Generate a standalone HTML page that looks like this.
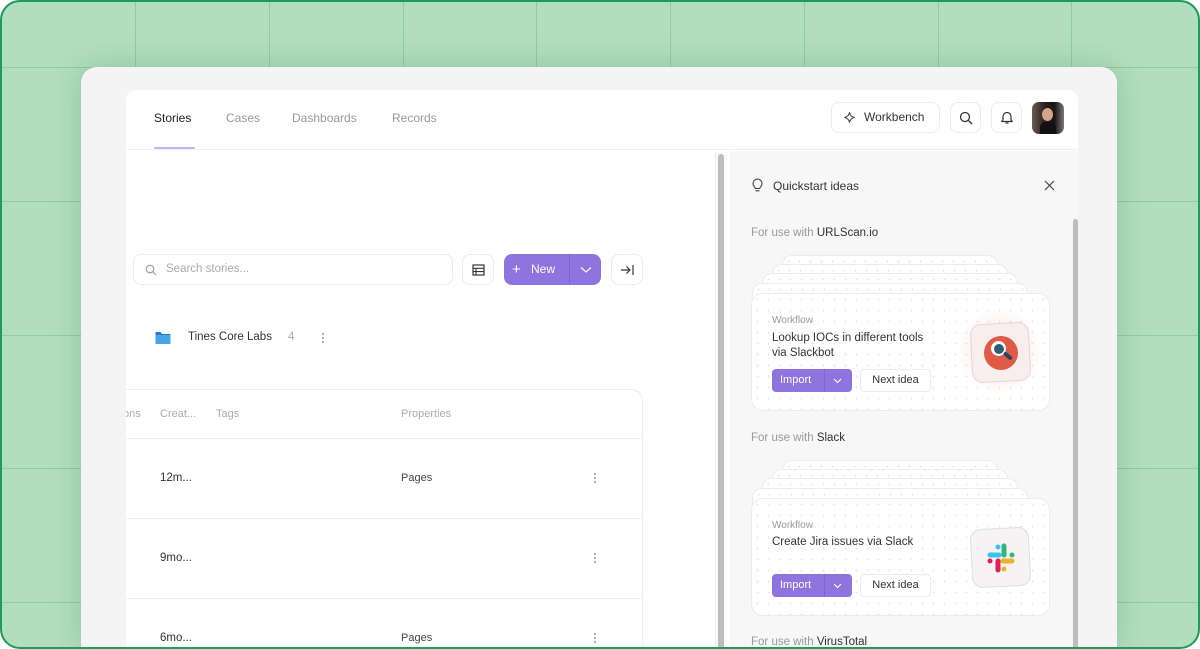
<!DOCTYPE html>
<html><head><meta charset="utf-8"><style>
*{box-sizing:border-box;margin:0;padding:0}
html,body{width:1200px;height:649px;overflow:hidden}
body{font-family:"Liberation Sans",sans-serif;background:#fff;position:relative}
.frame{position:absolute;left:0;top:0;width:1200px;height:649px;border:2px solid #1f9a5e;border-radius:20px;overflow:hidden;background:#b1dfbd}
.vl{position:absolute;top:0;bottom:0;width:1px;background:#93cba2}
.hl{position:absolute;left:0;right:0;height:1px;background:#93cba2}
.win{position:absolute;left:79px;top:65px;width:1036px;height:582px;background:#f4f4f4;border-radius:16px 16px 0 0;box-shadow:0 0 30px rgba(0,60,20,.18);overflow:hidden}
.main{position:absolute;left:45px;top:23px;width:952px;height:559px;background:#fff;border-radius:10px 10px 0 0;overflow:hidden}
.hdr{position:absolute;left:0;top:0;right:0;height:60px;border-bottom:1px solid #f0f0f0;background:#fff}
.nav{position:absolute;top:21px;font-size:12px;color:#999}
.t{position:absolute;white-space:nowrap}
.btn{position:absolute;border:1px solid #ebebeb;border-radius:8px;background:#fff}
.ql{font-size:11.5px;color:#999}
.ql b{font-weight:normal;color:#333}
.card{position:absolute;background:#fff;border:1px solid #ececec;border-radius:12px;background-image:radial-gradient(#e6e6e6 0.8px,transparent 1px);background-size:11px 11px}
.imp{position:absolute;width:80px;height:23px;background:#8f74e0;border-radius:4px;color:#fff;font-size:11px;line-height:23px}
.nxt{position:absolute;width:71px;height:23px;border:1px solid #ececec;border-radius:4px;background:#fff;font-size:11px;color:#333;text-align:center;line-height:21px}
.kb{position:absolute;width:2px;height:2px;border-radius:1px;background:#999;box-shadow:0 4px 0 #999,0 8px 0 #999}
</style></head><body>
<div class="frame">
<div class="vl" style="left:133px"></div><div class="vl" style="left:267px"></div><div class="vl" style="left:401px"></div><div class="vl" style="left:534px"></div><div class="vl" style="left:668px"></div><div class="vl" style="left:802px"></div><div class="vl" style="left:936px"></div><div class="vl" style="left:1069px"></div>
<div class="hl" style="top:65px"></div><div class="hl" style="top:199px"></div><div class="hl" style="top:333px"></div><div class="hl" style="top:466px"></div><div class="hl" style="top:600px"></div>
<div class="win">
<div class="main">
<div class="hdr">
<div class="nav" style="left:28px;color:#222">Stories</div>
<div style="position:absolute;left:28px;top:57px;width:41px;height:2px;background:#c3b5ef;border-radius:1px"></div>
<div class="nav" style="left:100px">Cases</div>
<div class="nav" style="left:166px">Dashboards</div>
<div class="nav" style="left:266px">Records</div>
<div class="btn" style="left:705px;top:12px;width:109px;height:31px;font-size:12px;color:#333;line-height:29px;padding-left:32px">Workbench
<svg style="position:absolute;left:11px;top:8px" width="13" height="13" viewBox="0 0 14 14"><path d="M7 1.5 Q7.8 6.2 12.5 7 Q7.8 7.8 7 12.5 Q6.2 7.8 1.5 7 Q6.2 6.2 7 1.5Z" fill="none" stroke="#444" stroke-width="1.1"/></svg></div>
<div class="btn" style="left:824px;top:12px;width:31px;height:31px"><svg style="position:absolute;left:8px;top:8px" width="14" height="14" viewBox="0 0 14 14"><circle cx="6" cy="6" r="4.5" fill="none" stroke="#333" stroke-width="1.3"/><path d="M9.5 9.5 13 13" stroke="#333" stroke-width="1.3"/></svg></div>
<div class="btn" style="left:865px;top:12px;width:31px;height:31px"><svg style="position:absolute;left:8px;top:7px" width="14" height="15" viewBox="0 0 14 15"><path d="M3 10V6.5a4 4 0 0 1 8 0V10l1.2 1.5H1.8Z" fill="none" stroke="#333" stroke-width="1.2" stroke-linejoin="round"/><path d="M5.5 13h3" stroke="#333" stroke-width="1.2"/></svg></div>
<div style="position:absolute;left:906px;top:12px;width:32px;height:32px;border-radius:7px;background:linear-gradient(90deg,#6b5a52,#2a201e 40%,#1a1414 70%,#777);overflow:hidden"><div style="position:absolute;left:10px;top:6px;width:11px;height:13px;border-radius:50%;background:#d4a48c"></div><div style="position:absolute;left:8px;top:20px;width:16px;height:14px;background:#111;border-radius:5px 5px 0 0"></div></div>
</div>
<div class="btn" style="left:7px;top:164px;width:320px;height:31px;font-size:11.5px;color:#aaa;line-height:29px;padding-left:32px">Search stories...
<svg style="position:absolute;left:11px;top:9px" width="12" height="12" viewBox="0 0 12 12"><circle cx="5" cy="5" r="3.8" fill="none" stroke="#999" stroke-width="1.1"/><path d="M8 8 11 11" stroke="#999" stroke-width="1.1"/></svg></div>
<div class="btn" style="left:336px;top:164px;width:32px;height:31px"><svg style="position:absolute;left:9px;top:9px" width="13" height="12" viewBox="0 0 13 12"><rect x="1" y="1" width="11" height="10" fill="none" stroke="#333" stroke-width="1.2"/><path d="M1 4.3h11M1 7.6h11M4 4.3v6.7" stroke="#333" stroke-width="1.1"/></svg></div>
<div style="position:absolute;left:378px;top:164px;width:97px;height:31px;background:#8f74e0;border-radius:8px;color:#fff;font-size:12px;line-height:31px">
<span style="position:absolute;left:8px;top:0;font-size:15px;font-weight:300">+</span><span style="position:absolute;left:27px">New</span>
<div style="position:absolute;left:65px;top:0;width:1px;height:31px;background:#7d62d0"></div>
<svg style="position:absolute;left:76px;top:12px" width="12" height="8" viewBox="0 0 12 8"><path d="M1 1.5 6 6 11 1.5" fill="none" stroke="#fff" stroke-width="1.2"/></svg></div>
<div class="btn" style="left:485px;top:164px;width:32px;height:31px"><svg style="position:absolute;left:8px;top:9px" width="15" height="12" viewBox="0 0 15 12"><path d="M1 6h9M6.5 2.5 10 6 6.5 9.5M13 1v10" fill="none" stroke="#333" stroke-width="1.2"/></svg></div>
<svg style="position:absolute;left:29px;top:241px" width="16" height="14" viewBox="0 0 16 14"><path d="M0.5 1h5l1.5 2h8.5v10h-15z" fill="#2a78c8"/><path d="M0.5 4h15v9h-15z" fill="#4aa4ec"/></svg>
<div class="t" style="left:62px;top:241px;font-size:11.5px;color:#333">Tines Core Labs</div>
<div class="t" style="left:162px;top:241px;font-size:11.5px;color:#aaa">4</div>
<div class="kb" style="left:196px;top:243px"></div>
<div style="position:absolute;left:-20px;top:299px;width:537px;height:320px;border:1px solid #efefef;border-radius:12px;background:#fff">
<div style="position:absolute;left:0;right:0;top:48px;height:1px;background:#f0f0f0"></div>
<div style="position:absolute;left:0;right:0;top:128px;height:1px;background:#f0f0f0"></div>
<div style="position:absolute;left:0;right:0;top:208px;height:1px;background:#f0f0f0"></div>
</div>
<div class="t" style="left:-3px;top:318px;font-size:11px;color:#aaa">ons</div>
<div class="t" style="left:34px;top:318px;font-size:11px;color:#aaa">Creat...</div>
<div class="t" style="left:90px;top:318px;font-size:11px;color:#aaa">Tags</div>
<div class="t" style="left:275px;top:318px;font-size:11px;color:#aaa">Properties</div>
<div class="t" style="left:34px;top:382px;font-size:11.5px;color:#333">12m...</div>
<div class="t" style="left:275px;top:382px;font-size:11px;color:#444">Pages</div>
<div class="t" style="left:34px;top:462px;font-size:11.5px;color:#333">9mo...</div>
<div class="t" style="left:34px;top:542px;font-size:11.5px;color:#333">6mo...</div>
<div class="t" style="left:275px;top:542px;font-size:11px;color:#444">Pages</div>
<div class="kb" style="left:468px;top:383px"></div>
<div class="kb" style="left:468px;top:463px"></div>
<div class="kb" style="left:468px;top:543px"></div>
<div style="position:absolute;left:589px;top:62px;width:12px;height:540px;background:#fafafa;border-left:1px solid #eee"></div>
<div style="position:absolute;left:592px;top:64px;width:6px;height:540px;background:#bdbdbd;border-radius:3px"></div>
<div style="position:absolute;left:604px;top:61px;width:348px;height:540px;background:#f7f7f7">
<svg style="position:absolute;left:21px;top:27px" width="13" height="15" viewBox="0 0 13 15"><path d="M4.3 10.5C4 9 2 8 2 5.6a4.5 4.5 0 0 1 9 0C11 8 9 9 8.7 10.5Z" fill="none" stroke="#444" stroke-width="1.1"/><path d="M4.5 12.8h4" stroke="#444" stroke-width="1.1"/></svg>
<div class="t" style="left:43px;top:28px;font-size:12px;color:#333">Quickstart ideas</div>
<svg style="position:absolute;left:314px;top:29px" width="11" height="11" viewBox="0 0 11 11"><path d="M1 1 10 10M10 1 1 10" stroke="#444" stroke-width="1.2"/></svg>
<div style="position:absolute;left:343px;top:68px;width:5px;height:480px;background:#bdbdbd;border-radius:3px"></div>
<div class="t ql" style="left:21px;top:76px">For use with <b>URLScan.io</b></div>
<div class="card" style="left:52px;top:104px;width:216px;height:60px;border-radius:10px"></div>
<div class="card" style="left:42px;top:113px;width:236px;height:60px;border-radius:10px"></div>
<div class="card" style="left:32px;top:122px;width:256px;height:60px;border-radius:10px"></div>
<div class="card" style="left:22px;top:132px;width:276px;height:60px;border-radius:10px"></div>
<div class="card" style="left:21px;top:142px;width:299px;height:118px">
<div style="position:absolute;left:200px;top:10px;width:95px;height:95px;border-radius:50%;background:radial-gradient(rgba(240,120,110,.25),transparent 65%)"></div>
<div class="t" style="left:20px;top:21px;font-size:10px;color:#999">Workflow</div>
<div class="t" style="left:20px;top:37px;font-size:11.5px;color:#333;line-height:15px">Lookup IOCs in different tools<br>via Slackbot</div>
<div class="imp" style="top:75px;left:20px"><span style="position:absolute;left:8px;top:0">Import</span><div style="position:absolute;left:52px;top:0;width:1px;height:23px;background:#7e63d2"></div><svg style="position:absolute;left:61px;top:9px" width="9" height="6" viewBox="0 0 9 6"><path d="M1 1 4.5 4.5 8 1" fill="none" stroke="#fff" stroke-width="1.1"/></svg></div>
<div class="nxt" style="top:75px;left:108px">Next idea</div>
<div style="position:absolute;left:219px;top:29px;width:59px;height:59px;border:1px solid #e0d6d6;border-radius:11px;background:#f8eeed;transform:rotate(-3deg)"></div>
<div style="position:absolute;left:232px;top:42px;width:34px;height:34px;border-radius:50%;background:#e05a45"></div>
<div style="position:absolute;left:239px;top:47px;width:15px;height:15px;border-radius:50%;background:#fff"></div>
<div style="position:absolute;left:241.5px;top:49.5px;width:10px;height:10px;border-radius:50%;background:#2f5d78"></div>
<div style="position:absolute;left:251px;top:60px;width:10px;height:3.5px;background:#22475e;transform:rotate(40deg);border-radius:2px"></div>
</div>
<div class="t ql" style="left:21px;top:281px">For use with <b>Slack</b></div>
<div class="card" style="left:52px;top:309px;width:216px;height:60px;border-radius:10px"></div>
<div class="card" style="left:42px;top:318px;width:236px;height:60px;border-radius:10px"></div>
<div class="card" style="left:32px;top:327px;width:256px;height:60px;border-radius:10px"></div>
<div class="card" style="left:22px;top:337px;width:276px;height:60px;border-radius:10px"></div>
<div class="card" style="left:21px;top:347px;width:299px;height:118px">
<div class="t" style="left:20px;top:21px;font-size:10px;color:#999">Workflow</div>
<div class="t" style="left:20px;top:37px;font-size:11.5px;color:#333">Create Jira issues via Slack</div>
<div class="imp" style="top:75px;left:20px"><span style="position:absolute;left:8px;top:0">Import</span><div style="position:absolute;left:52px;top:0;width:1px;height:23px;background:#7e63d2"></div><svg style="position:absolute;left:61px;top:9px" width="9" height="6" viewBox="0 0 9 6"><path d="M1 1 4.5 4.5 8 1" fill="none" stroke="#fff" stroke-width="1.1"/></svg></div>
<div class="nxt" style="top:75px;left:108px">Next idea</div>
<div style="position:absolute;left:219px;top:29px;width:59px;height:59px;border:1px solid #dedede;border-radius:11px;background:#f5f3f3;transform:rotate(-3deg)"></div>
<svg style="position:absolute;left:231px;top:41px" width="36" height="36" viewBox="0 0 36 36" stroke-linecap="round" stroke-width="5">
<path d="M7 15h9" stroke="#36c5f0"/><path d="M15 7v0" stroke="#36c5f0"/>
<path d="M21 6v9" stroke="#2eb67d"/><path d="M29 15h0" stroke="#2eb67d"/>
<path d="M20 21h9" stroke="#ecb22e"/><path d="M21 29v0" stroke="#ecb22e"/>
<path d="M15 21v9" stroke="#e01e5a"/><path d="M7 21h0" stroke="#e01e5a"/>
</svg>
</div>
<div class="t ql" style="left:21px;top:485px">For use with <b>VirusTotal</b></div>
</div>
</div>
</div>
</div>
</body></html>
